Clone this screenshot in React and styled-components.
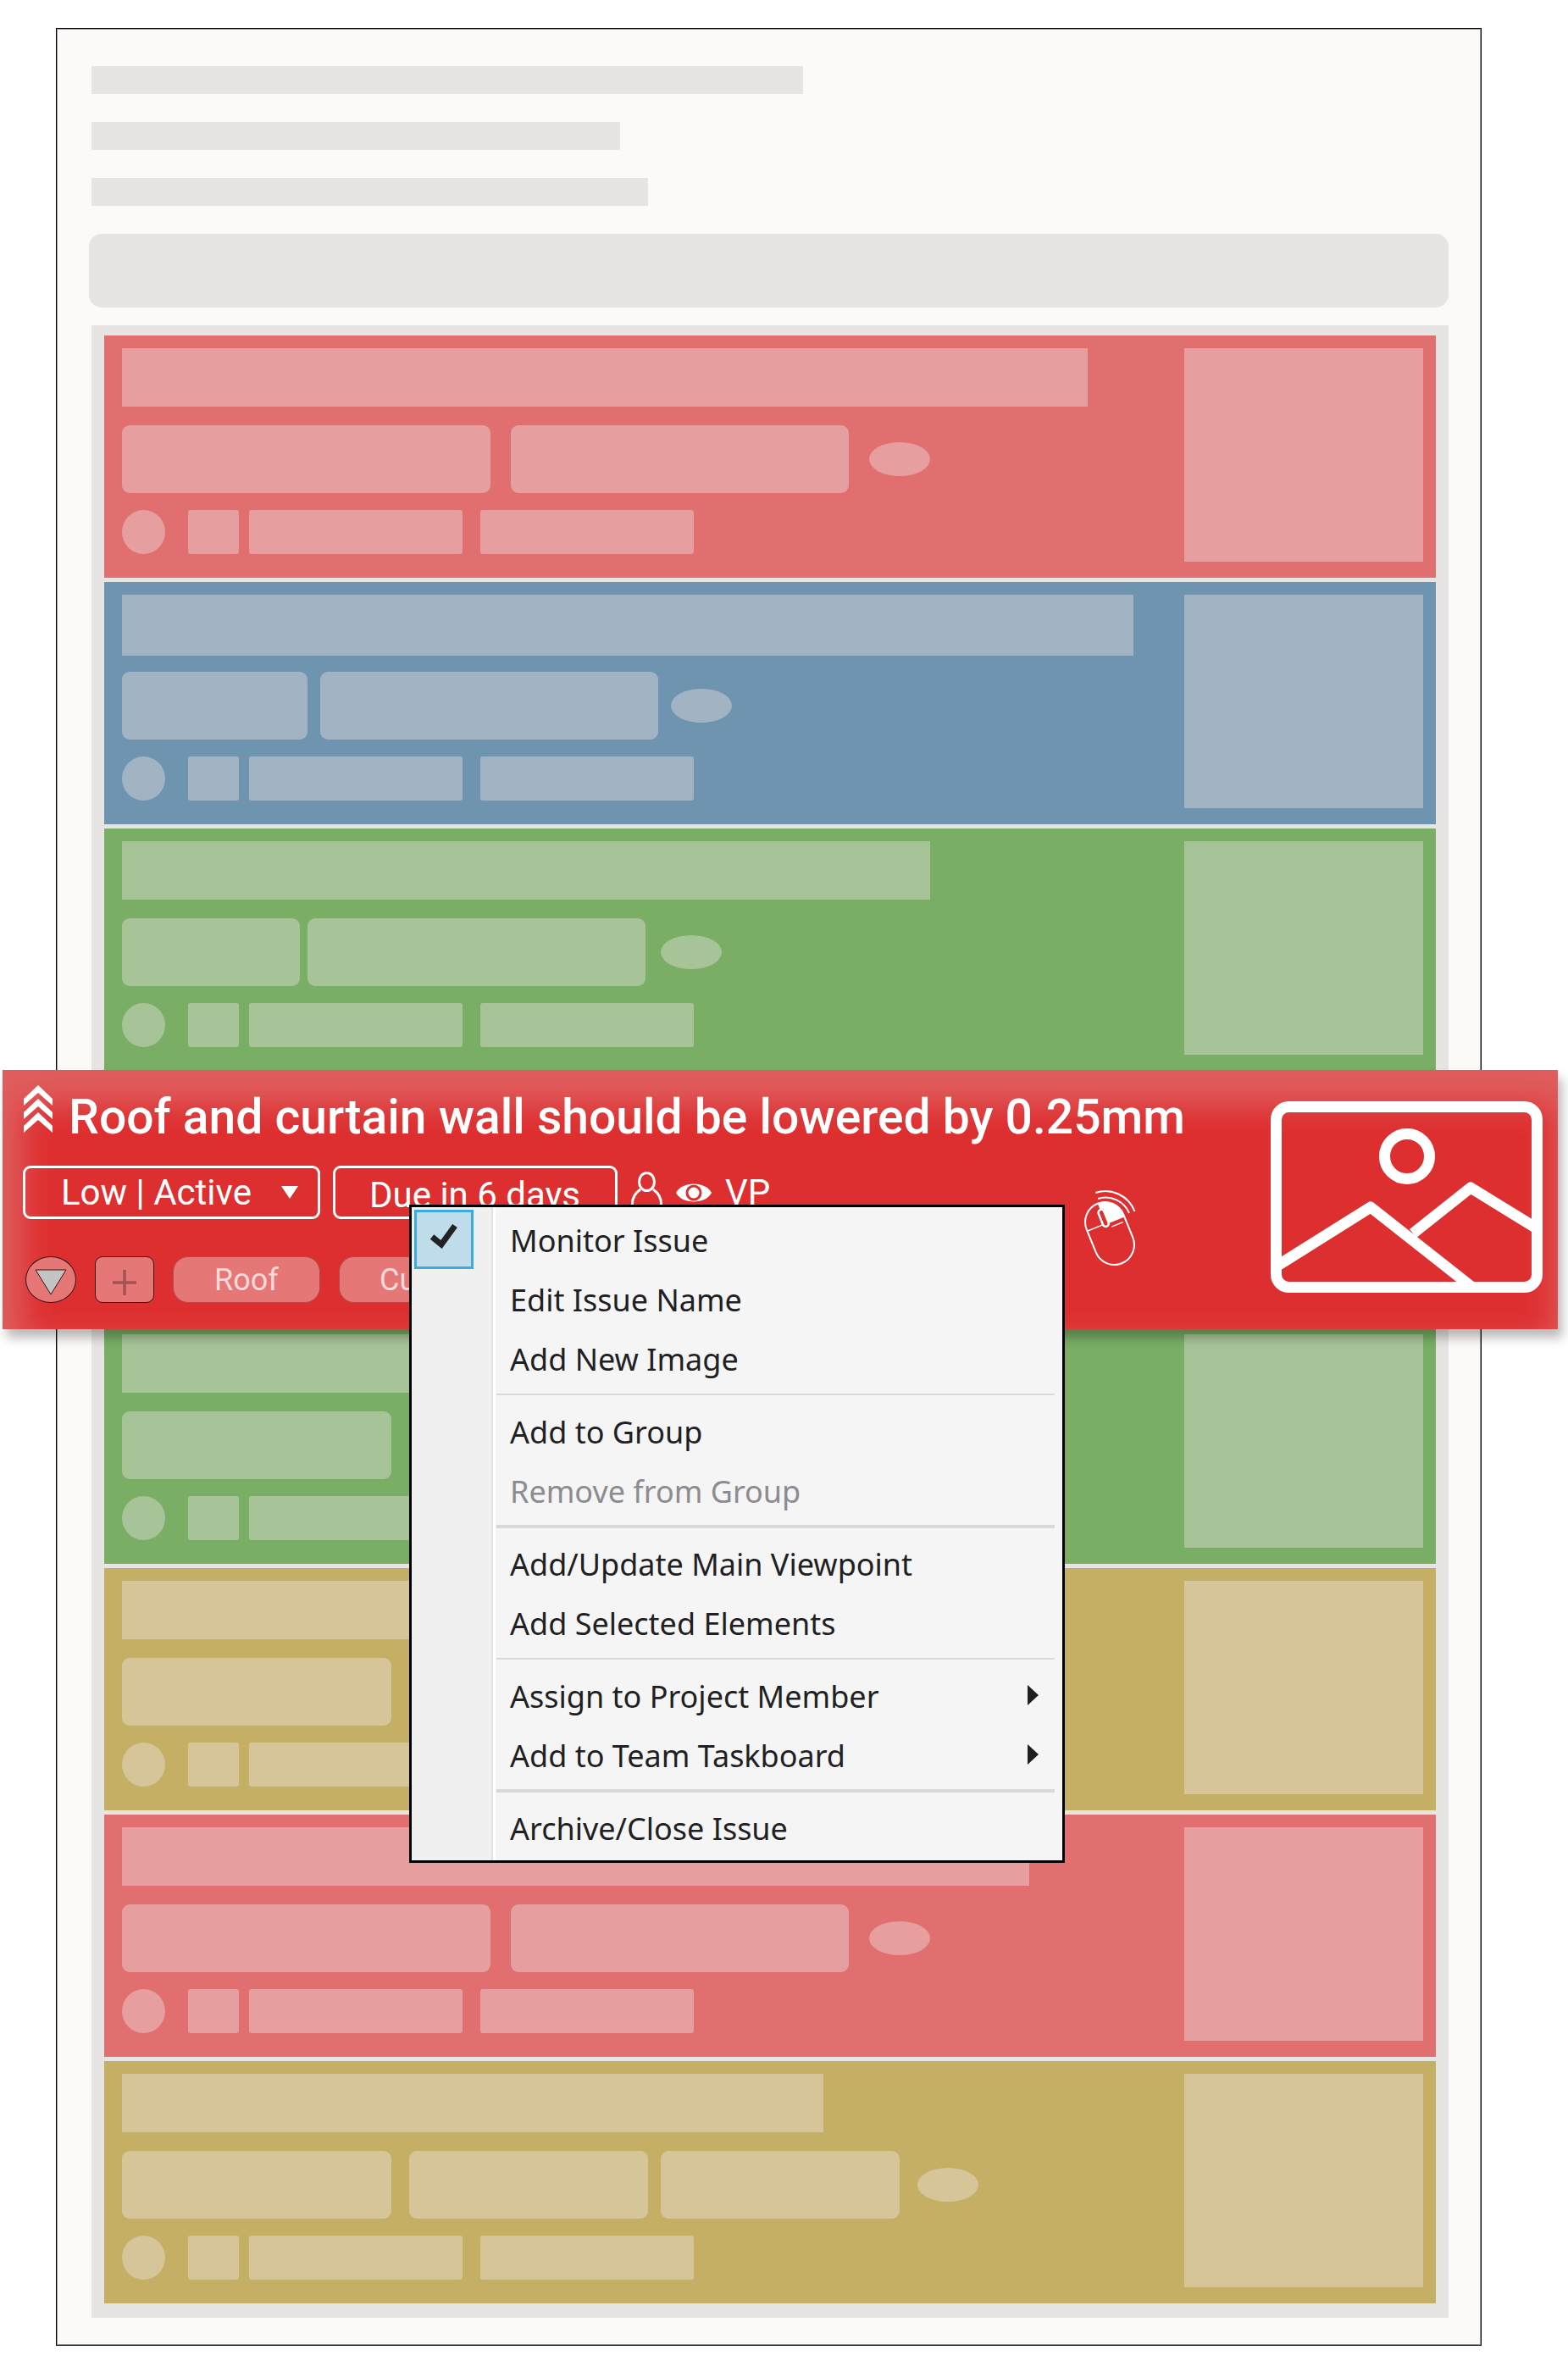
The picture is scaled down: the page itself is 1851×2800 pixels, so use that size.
import React, { useState } from "react";
import styled, { createGlobalStyle } from "styled-components";

const GlobalStyle = createGlobalStyle`
  *, *::before, *::after { box-sizing: border-box; }
  body {
    margin: 0;
    background: #fff;
    font-family: Roboto, "Liberation Sans", sans-serif;
  }
  button, select, input { font: inherit; color: inherit; margin: 0; }
`;

const tones = {
  red: { base: "#e16f6f", soft: "#e69e9e" },
  blue: { base: "#6f94b0", soft: "#a2b4c4" },
  green: { base: "#79ae64", soft: "#a7c498" },
  gold: { base: "#c4af64", soft: "#d5c598" },
};

/* ---------- panel ---------- */

const Panel = styled.main`
  margin: 33px 102px 31px 66px;
  padding: 44px 38px 32px 41px;
  background: #fdf9f8;
  border: 1px solid #000;
  box-shadow: inset 0 0 0 1px #9a9898;
`;

const Heading = styled.div`
  display: flex;
  flex-direction: column;
  gap: 33px;
`;

const HeadingLine = styled.div`
  width: ${(p) => p.$width}px;
  max-width: 100%;
  height: 33px;
  background: #e6e5e3;
`;

const Toolbar = styled.div`
  height: 87px;
  margin: 33px 0 21px -3px;
  border-radius: 15px;
  background: #e6e5e3;
`;

const IssueList = styled.ul`
  display: flex;
  flex-direction: column;
  gap: 5px;
  margin: 0;
  padding: 12px 15px 17px;
  list-style: none;
  background: #e6e5e3;
`;

/* ---------- placeholder cards ---------- */

const Card = styled.li`
  display: flex;
  justify-content: space-between;
  align-items: flex-start;
  height: 286px;
  padding: 15px 15px 0 21px;
  background: ${(p) => tones[p.$tone].base};
  --soft: ${(p) => tones[p.$tone].soft};
`;

const CardBody = styled.div`
  display: grid;
  grid-template-rows: 91px 100px 52px;
  align-items: start;
`;

const Row = styled.div`
  display: flex;
  align-items: flex-start;
`;

const TitleBlock = styled.div`
  width: ${(p) => p.$width}px;
  height: ${(p) => p.$height}px;
  background: var(--soft);
`;

const Field = styled.div`
  width: ${(p) => p.$width}px;
  height: 80px;
  margin-right: ${(p) => p.$gap}px;
  border-radius: 9px;
  background: var(--soft);
`;

const Oval = styled.div`
  align-self: center;
  width: 72px;
  height: 40px;
  border-radius: 50%;
  background: var(--soft);
`;

const Dot = styled.div`
  width: 51px;
  height: 52px;
  margin-right: 27px;
  border-radius: 50%;
  background: var(--soft);
`;

const Chip = styled.div`
  width: ${(p) => p.$width}px;
  height: 52px;
  margin-right: ${(p) => p.$gap}px;
  border-radius: 3px;
  background: var(--soft);
`;

const Thumb = styled.div`
  width: 282px;
  height: 252px;
  background: var(--soft);
`;

function PlaceholderCard({ tone, title, titleHeight = 69, fields }) {
  return (
    <Card $tone={tone} aria-hidden="true">
      <CardBody>
        <TitleBlock $width={title} $height={titleHeight} />
        <Row>
          {fields.map(([width, gap], i) => (
            <Field key={i} $width={width} $gap={gap} />
          ))}
          <Oval />
        </Row>
        <Row>
          <Dot />
          <Chip $width={60} $gap={12} />
          <Chip $width={252} $gap={21} />
          <Chip $width={252} $gap={0} />
        </Row>
      </CardBody>
      <Thumb />
    </Card>
  );
}

/* ---------- highlighted issue ---------- */

const Issue = styled.li`
  position: relative;
  z-index: 1;
  display: grid;
  grid-template-columns: 1fr auto auto;
  grid-template-rows: 95px 63px 99px;
  margin: -6px -144px -14px -120px;
  padding: 18px 18px 31px 24px;
  color: #fff;
  background: #de2f30;
  box-shadow:
    inset 10px 27px 36px 14px rgba(232, 232, 232, 0.25),
    5px 10px 12px rgba(0, 0, 0, 0.28);
`;

const IssueHeader = styled.div`
  grid-column: 1 / 3;
  display: flex;
  align-items: flex-start;
  gap: 18px;
`;

const IssueTitle = styled.h2`
  margin: 0;
  font-size: 57px;
  font-weight: 500;
  line-height: 76px;
  white-space: nowrap;
`;

const IssueControls = styled.div`
  grid-column: 1;
  display: flex;
  align-items: center;
  font-size: 42px;
`;

const StatusPicker = styled.label`
  display: grid;
  width: 351px;
  height: 63px;
  margin-right: 15px;
  align-items: center;

  & > * { grid-area: 1 / 1; }
  & > svg { justify-self: end; margin-right: 26px; pointer-events: none; }
`;

const StatusSelect = styled.select`
  width: 100%;
  height: 100%;
  padding: 0 45px 0 42px;
  appearance: none;
  color: #fff;
  background: transparent;
  border: 3px solid #fff;
  border-radius: 9px;
`;

const DueButton = styled.button`
  width: 336px;
  height: 63px;
  margin-right: 16px;
  padding: 6px 0 0 40px;
  text-align: left;
  white-space: nowrap;
  background: transparent;
  border: 3px solid #fff;
  border-radius: 9px;
`;

const Watchers = styled.div`
  display: flex;
  align-items: center;
  gap: 16px;
`;

const IssueTags = styled.div`
  grid-column: 1;
  display: flex;
  gap: 22px;
  padding-left: 3px;
  margin-top: 44px;
  height: 55px;
`;

const RoundButton = styled.button`
  display: grid;
  place-items: center;
  width: 60px;
  padding: 6px 0 0;
  background: #e57777;
  border: 1px solid #3a1414;
  border-radius: 50%;
`;

const AddButton = styled.button`
  display: grid;
  place-items: center;
  width: 70px;
  padding: 6px 0 0;
  background: #e57777;
  border: 1px solid #3a1414;
  border-radius: 9px;
`;

const Tag = styled.button`
  min-width: 174px;
  padding: 2px 47px 0;
  font-size: 36px;
  line-height: 51px;
  color: #f9d9d9;
  background: #e57777;
  border: 1px solid #b04a4b;
  border-radius: 18px;
`;

const ClickHint = styled.svg`
  grid-column: 2;
  grid-row: 2 / 4;
  margin-top: 28px;
  margin-right: 159px;
`;

const Picture = styled.svg`
  grid-column: 3;
  grid-row: 1 / 4;
  margin-top: 19px;
`;

/* ---------- context menu ---------- */

const Menu = styled.div`
  position: absolute;
  top: 159px;
  left: 480px;
  width: 774px;
  padding: 3px 0 4px;
  color: #1f1f24;
  font-family: "Noto Sans", "Open Sans", sans-serif;
  font-size: 36px;
  border: 3px solid #000;
  background: linear-gradient(
    to right,
    #f0f0f0 0 94px,
    #e2e2e2 94px 96px,
    #fff 96px 99px,
    #f5f5f5 99px
  );
`;

const itemLayout = `
  display: grid;
  grid-template-columns: 70px 1fr auto;
  column-gap: 43px;
  align-items: center;
  width: 100%;
  height: 70px;
  padding: 0 28px 0 3px;
  text-align: left;
  white-space: nowrap;
`;

const MenuButton = styled.button`
  ${itemLayout}
  background: transparent;
  border: 0;
  &:disabled { color: #8c8c90; }
`;

const MenuCheck = styled.label`
  ${itemLayout}
`;

const ItemText = styled.span`
  grid-column: 2;
  padding-top: 3px;
  line-height: 60px;
`;

const TickCell = styled.span`
  display: grid;
  place-items: center;
  height: 70px;
  & > * { grid-area: 1 / 1; }
  & > svg { pointer-events: none; }
`;

const Tick = styled.input`
  width: 70px;
  height: 70px;
  appearance: none;
  &:checked {
    background: #bedcea;
    border: 3px solid #3cabdf;
  }
`;

const Separator = styled.hr`
  height: ${(p) => (p.$bold ? 4 : 2)}px;
  margin: ${(p) => (p.$bold ? 6 : 7)}px 9px ${(p) => (p.$bold ? 6 : 7)}px 100px;
  border: 0;
  background: #d9d9d9;
`;

function SubmenuArrow() {
  return (
    <svg width="13" height="24" viewBox="0 0 13 24" aria-hidden="true">
      <path d="M0 0 L13 12 L0 24Z" fill="#1f1f1f" />
    </svg>
  );
}

function MenuItem({ children, submenu, disabled }) {
  return (
    <MenuButton
      role="menuitem"
      disabled={disabled}
      aria-haspopup={submenu ? "menu" : undefined}
    >
      <ItemText>{children}</ItemText>
      {submenu && <SubmenuArrow />}
    </MenuButton>
  );
}

function IssueMenu() {
  const [monitored, setMonitored] = useState(true);
  return (
    <Menu role="menu" aria-label="Issue actions">
      <MenuCheck>
        <TickCell>
          <Tick
            type="checkbox"
            checked={monitored}
            onChange={(e) => setMonitored(e.target.checked)}
          />
          {monitored && (
            <svg width="34" height="36" viewBox="0 0 34 36" aria-hidden="true">
              <path d="M3 15 L14 24 L30 2" fill="none" stroke="#222" strokeWidth="7" />
            </svg>
          )}
        </TickCell>
        <ItemText>Monitor Issue</ItemText>
      </MenuCheck>
      <MenuItem>Edit Issue Name</MenuItem>
      <MenuItem>Add New Image</MenuItem>
      <Separator />
      <MenuItem>Add to Group</MenuItem>
      <MenuItem disabled>Remove from Group</MenuItem>
      <Separator $bold />
      <MenuItem>Add/Update Main Viewpoint</MenuItem>
      <MenuItem>Add Selected Elements</MenuItem>
      <Separator />
      <MenuItem submenu>Assign to Project Member</MenuItem>
      <MenuItem submenu>Add to Team Taskboard</MenuItem>
      <Separator $bold />
      <MenuItem>Archive/Close Issue</MenuItem>
    </Menu>
  );
}

function ActiveIssue() {
  return (
    <Issue>
      <IssueHeader>
        <svg width="36" height="58" viewBox="0 0 36 58" aria-hidden="true">
          {[0, 16, 32].map((y) => (
            <path
              key={y}
              d="M1 16 L18 0 L35 16 V24 L18 9 L1 24Z"
              transform={`translate(0 ${y})`}
              fill="#fff"
            />
          ))}
        </svg>
        <IssueTitle>Roof and curtain wall should be lowered by 0.25mm</IssueTitle>
      </IssueHeader>

      <IssueControls>
        <StatusPicker>
          <StatusSelect aria-label="Priority and status" defaultValue="low-active">
            <option value="low-active">Low | Active</option>
          </StatusSelect>
          <svg width="20" height="15" viewBox="0 0 20 15" aria-hidden="true">
            <path d="M0 0 H20 L10 15Z" fill="#fff" />
          </svg>
        </StatusPicker>
        <DueButton>Due in 6 days</DueButton>
        <Watchers>
          <svg width="37" height="49" viewBox="0 0 37 49" aria-hidden="true">
            <g fill="none" stroke="#fff" strokeWidth="3">
              <ellipse cx="18.5" cy="12" rx="9" ry="10.5" />
              <path d="M11 21 C4 26 1.5 32 1.5 38 C1.5 44 8 47 18.5 47 C29 47 35.5 44 35.5 38 C35.5 32 33 26 26 21" />
            </g>
          </svg>
          <svg width="42" height="22" viewBox="0 0 42 22" aria-hidden="true">
            <path d="M0 11 C7 -3 35 -3 42 11 C35 25 7 25 0 11Z" fill="#fff" />
            <circle cx="21" cy="11" r="9.5" fill="#de2f30" />
            <circle cx="21" cy="11" r="6.5" fill="#fff" />
          </svg>
          <span>VP</span>
        </Watchers>
      </IssueControls>

      <IssueTags>
        <RoundButton aria-label="Expand issue">
          <svg width="38" height="31" viewBox="0 0 38 31">
            <path d="M1 1 H37 L19 30Z" fill="#c4c4c4" stroke="#3a1414" strokeWidth="1" />
          </svg>
        </RoundButton>
        <AddButton aria-label="Add tag">
          <svg width="28" height="30" viewBox="0 0 28 30">
            <path d="M14 0 V30 M0 15 H28" stroke="#a55252" strokeWidth="3.5" />
          </svg>
        </AddButton>
        <Tag>Roof</Tag>
        <Tag>Curtain</Tag>
      </IssueTags>

      <ClickHint width="62" height="91" viewBox="0 0 62 91" aria-hidden="true">
        <g fill="none" stroke="#fff" strokeWidth="2">
          <path d="M14.3 4 A37 37 0 0 1 60.5 26" />
          <path d="M17.3 11 A30 30 0 0 1 54 28" />
          <g transform="translate(31 52) rotate(-22)">
            <rect x="-23.5" y="-38" width="47" height="76" rx="23.5" />
            <path d="M-23.5 -12.5 H-4 M5 -6.5 H19.5" strokeWidth="1.5" />
            <path
              d="M0 -38 A23.5 23.5 0 0 1 23.5 -14.5 V-11.5 H4 V-30 H0Z"
              fill="#fff"
              stroke="none"
            />
            <rect x="-3.5" y="-30" width="7" height="21" rx="3.5" fill="#de2f30" strokeWidth="2.5" />
          </g>
        </g>
      </ClickHint>

      <Picture width="321" height="226" viewBox="0 0 321 226" role="img" aria-label="Issue image">
        <g fill="none" stroke="#fff" strokeWidth="13">
          <rect x="6.5" y="6.5" width="308" height="213" rx="15" />
          <circle cx="161" cy="65" r="26.5" />
          <g strokeLinejoin="round">
            <path d="M8 194 L118 125 L236 218" />
            <path d="M168 156 L236 102 L314 150" />
          </g>
        </g>
      </Picture>

      <IssueMenu />
    </Issue>
  );
}

export default function App() {
  return (
    <>
      <GlobalStyle />
      <Panel>
        <Heading aria-hidden="true">
          <HeadingLine $width={840} />
          <HeadingLine $width={624} />
          <HeadingLine $width={657} />
        </Heading>
        <Toolbar aria-hidden="true" />
        <IssueList>
          <PlaceholderCard tone="red" title={1140} fields={[[435, 24], [399, 24]]} />
          <PlaceholderCard tone="blue" title={1194} titleHeight={72} fields={[[219, 15], [399, 15]]} />
          <PlaceholderCard tone="green" title={954} fields={[[210, 9], [399, 18]]} />
          <ActiveIssue />
          <PlaceholderCard tone="green" title={840} fields={[[318, 21], [282, 15]]} />
          <PlaceholderCard tone="gold" title={840} fields={[[318, 21], [282, 15]]} />
          <PlaceholderCard tone="red" title={1071} fields={[[435, 24], [399, 24]]} />
          <PlaceholderCard tone="gold" title={828} fields={[[318, 21], [282, 15], [282, 21]]} />
        </IssueList>
      </Panel>
    </>
  );
}
